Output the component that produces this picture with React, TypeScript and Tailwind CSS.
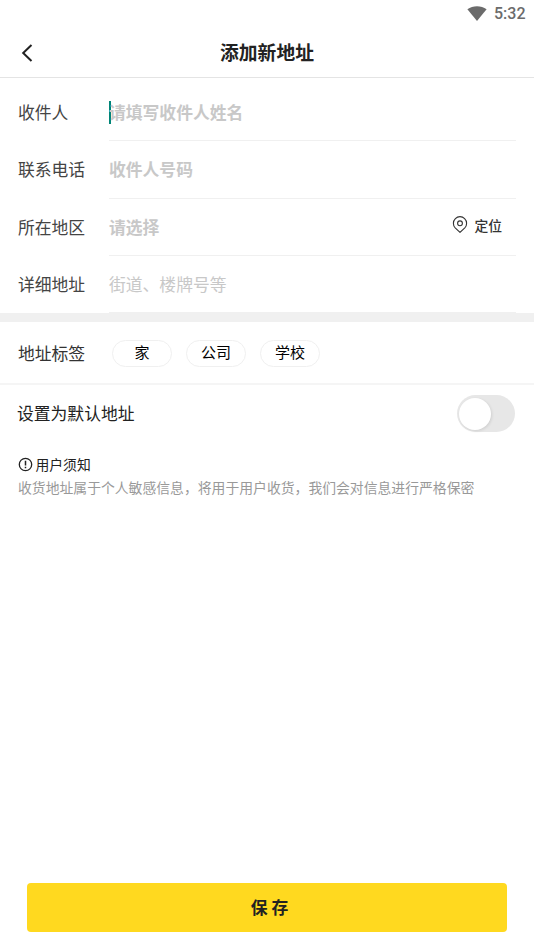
import { useState } from "react";

interface Field {
  label: string;
  hint: string;
  bold: boolean;
  focused?: boolean;
  locate?: boolean;
}

const fields: Field[] = [
  { label: "收件人", hint: "请填写收件人姓名", bold: true, focused: true },
  { label: "联系电话", hint: "收件人号码", bold: true },
  { label: "所在地区", hint: "请选择", bold: true, locate: true },
  { label: "详细地址", hint: "街道、楼牌号等", bold: false },
];

const tags = ["家", "公司", "学校"];

function StatusBar() {
  return (
    <div className="flex h-[27px] items-center justify-end gap-[7px] pr-[8.5px] text-[#6b6b6b]">
      <svg width="20" height="16" viewBox="0 0 20 16" fill="currentColor">
        <path d="M0.4 3.3C5.8 -0.9 14.2 -0.9 19.6 3.3L10 15.1Z" />
      </svg>
      <span className="font-['Roboto',sans-serif] text-[16px] leading-[27px] font-medium">5:32</span>
    </div>
  );
}

function LocateButton() {
  return (
    <button type="button" className="mr-[14px] flex items-center gap-[6px] pb-[3px] text-[13.8px] font-medium text-[#333]">
      <svg className="mb-[2px]" width="16" height="18" viewBox="0 0 16 18" fill="none" stroke="currentColor" strokeWidth="1.1">
        <path d="M8 16.4L3.2 11.8A6.6 6.6 0 1 1 12.8 11.8Z" strokeLinejoin="round" />
        <circle cx="8" cy="7.3" r="2.4" />
      </svg>
      定位
    </button>
  );
}

export default function App() {
  const [isDefault, setIsDefault] = useState(false);
  const [tag, setTag] = useState("");

  return (
    <div className="flex h-[949px] w-[534px] flex-col overflow-hidden bg-white font-['Noto_Sans_CJK_SC',sans-serif]">
      <StatusBar />

      <header className="grid h-[51px] grid-cols-[54px_1fr_54px] items-center border-b border-[#e4e4e4]">
        <button type="button" className="flex justify-center pt-[2px]">
          <svg width="14" height="20" viewBox="0 0 14 20" fill="none" stroke="#222" strokeWidth="2">
            <path d="M11.5 2L3.2 10L11.5 18" />
          </svg>
        </button>
        <h1 className="text-center text-[18.8px] leading-[28px] font-bold text-[#222]">添加新地址</h1>
      </header>

      <section className="flex h-[235px] flex-col pt-[6px]">
        {fields.map((f) => (
          <div key={f.label} className="flex flex-1 pr-[18px] pl-[18px] text-[16.8px]">
            <div className="flex w-[91px] items-center text-[#444]">{f.label}</div>
            <div className="flex flex-1 items-center border-b border-[#f0f0f0] pt-px text-[#c8c8c8]">
              {f.focused && <span className="-mr-[2px] h-[23px] w-[2px] bg-[#008577]" />}
              <span className={f.bold ? "flex-1 font-bold" : "flex-1"}>{f.hint}</span>
              {f.locate && <LocateButton />}
            </div>
          </div>
        ))}
      </section>

      <div className="h-[9px] bg-[#f0f0f0]" />

      <section className="flex h-[63px] items-center border-b-2 border-[#f5f5f5] pt-[2px] pl-[18px]">
        <span className="w-[94px] text-[16.8px] text-[#333]">地址标签</span>
        <div className="flex gap-[14px]">
          {tags.map((t) => (
            <button
              key={t}
              type="button"
              onClick={() => setTag(t)}
              className={`flex h-[27px] w-[60px] items-center justify-center rounded-full border pb-[3px] text-[15px] text-black ${
                tag === t ? "border-[#ffd91f]" : "border-[#f0f0f0]"
              }`}
            >
              {t}
            </button>
          ))}
        </div>
      </section>

      <section className="flex h-[57px] items-center justify-between pr-[19px] pl-[17px]">
        <span className="pt-px text-[16.8px] text-[#222]">设置为默认地址</span>
        <button
          type="button"
          onClick={() => setIsDefault(!isDefault)}
          className={`flex h-[37px] w-[58px] items-center rounded-full px-[2px] ${
            isDefault ? "justify-end bg-[#ffd91f]" : "bg-[#e7e7e7]"
          }`}
        >
          <span className="size-[32px] rounded-full bg-white shadow-[1px_1px_3px_rgba(0,0,0,0.1)]" />
        </button>
      </section>

      <section className="px-[18px] pt-[11px]">
        <div className="flex h-[22px] items-center gap-[2.5px] text-[13.8px] text-[#222]">
          <svg width="15" height="15" viewBox="0 0 15 15" fill="none" stroke="currentColor" strokeWidth="1.3">
            <circle cx="7.5" cy="7.5" r="6.2" />
            <path d="M7.5 3.8V8.6M7.5 9.8V11.3" strokeWidth="1.5" />
          </svg>
          用户须知
        </div>
        <p className="h-[24px] text-[13.83px] leading-[24px] whitespace-nowrap text-[#999]">
          收货地址属于个人敏感信息，将用于用户收货，我们会对信息进行严格保密
        </p>
      </section>

      <button
        type="button"
        className="mx-[27px] mt-auto mb-[17px] h-[49px] rounded-[4px] bg-[#ffd91f] pl-[5px] text-[16.8px] font-bold text-[#222]"
      >
        保 存
      </button>
    </div>
  );
}
